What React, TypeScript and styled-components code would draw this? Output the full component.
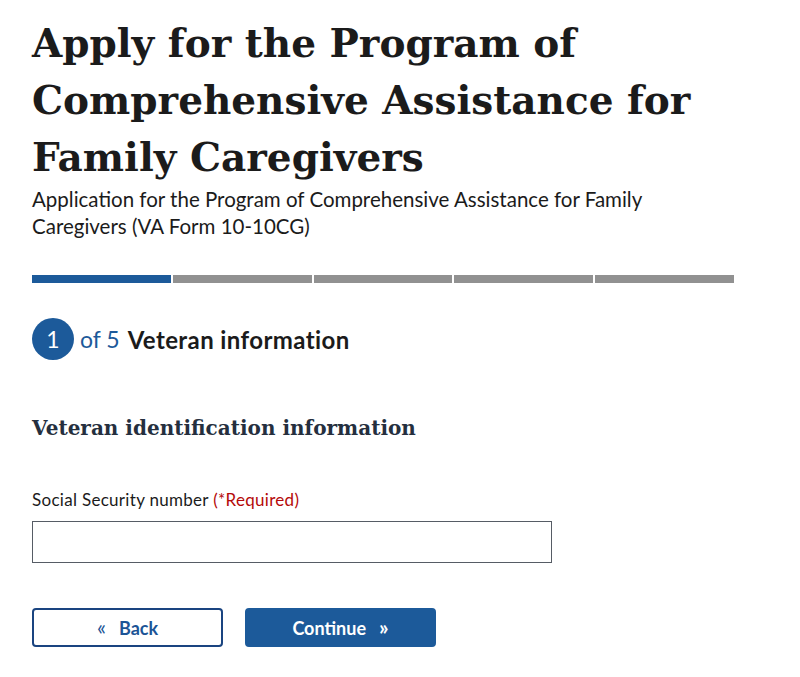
import React from "react";
import styled, { createGlobalStyle } from "styled-components";

const Global = createGlobalStyle`
  html, body { margin: 0; padding: 0; background: #ffffff; }
  body { font-family: "Lato", "Noto Sans", sans-serif; color: #1b1b1b; }
  * { box-sizing: border-box; }
`;

const Page = styled.main`
  width: 800px;
  padding: 0 66px 0 32px;
  display: flex;
  flex-direction: column;
`;

const Title = styled.h1`
  margin: 15px 0 0;
  font-family: "DejaVu Serif", serif;
  font-weight: 700;
  font-size: 39px;
  line-height: 57px;
  color: #1b1b1b;
`;

const Subtitle = styled.p`
  margin: 0;
  font-size: 20.5px;
  line-height: 27px;
  color: #1b1b1b;
`;

const Progress = styled.div`
  margin-top: 35px;
  display: grid;
  grid-template-columns: repeat(5, 1fr);
  gap: 2px;
`;

const Segment = styled.div<{ $active?: boolean }>`
  height: 8px;
  background: ${(p) => (p.$active ? "#1c5a9a" : "#919191")};
`;

const StepRow = styled.div`
  margin-top: 35px;
  display: flex;
  align-items: center;
  gap: 6px;
`;

const StepCircle = styled.span`
  width: 42px;
  height: 42px;
  border-radius: 50%;
  background: #1c5a9a;
  color: #ffffff;
  display: flex;
  align-items: center;
  justify-content: center;
  font-size: 23px;
`;

const StepOf = styled.span`
  color: #1c5a9a;
  font-size: 23px;
`;

const StepName = styled.span`
  font-weight: 700;
  font-size: 24px;
  letter-spacing: 0.4px;
  color: #1b1b1b;
  margin-left: 2px;
`;

const Section = styled.h3`
  margin: 54px 0 0;
  font-family: "DejaVu Serif", serif;
  font-weight: 700;
  font-size: 20px;
  line-height: 28px;
  color: #252f3e;
`;

const Label = styled.label`
  margin-top: 47px;
  font-size: 17px;
  letter-spacing: 0.3px;
  line-height: 22px;
  color: #1b1b1b;
`;

const Req = styled.span`
  color: #b50909;
`;

const Input = styled.input`
  margin-top: 10px;
  width: 520px;
  height: 42px;
  border: 1px solid #565c65;
  border-radius: 0;
  font-size: 16px;
  padding: 0 8px;
`;

const Buttons = styled.div`
  margin-top: 45px;
  display: flex;
  gap: 22px;
`;

const Button = styled.button<{ $primary?: boolean }>`
  width: 191px;
  height: 39px;
  border-radius: 4px;
  font-family: "Lato", sans-serif;
  font-weight: 700;
  font-size: 18px;
  display: flex;
  align-items: center;
  justify-content: center;
  gap: 13px;
  cursor: pointer;
  border: 2px solid ${(p) => (p.$primary ? "#1c5a9a" : "#1a4480")};
  background: ${(p) => (p.$primary ? "#1c5a9a" : "#ffffff")};
  color: ${(p) => (p.$primary ? "#ffffff" : "#1c5496")};
`;

const Chev = styled.span<{ $bold?: boolean }>`
  font-weight: ${(p) => (p.$bold ? 700 : 400)};
  font-size: 21px;
  line-height: 1;
  margin-top: -2px;
`;

export default function App() {
  return (
    <>
      <Global />
      <Page>
        <Title>Apply for the Program of Comprehensive Assistance for Family Caregivers</Title>
        <Subtitle>
          Application for the Program of Comprehensive Assistance for Family Caregivers (VA Form 10-10CG)
        </Subtitle>
        <Progress>
          <Segment $active />
          <Segment />
          <Segment />
          <Segment />
          <Segment />
        </Progress>
        <StepRow>
          <StepCircle>1</StepCircle>
          <StepOf>of 5</StepOf>
          <StepName>Veteran information</StepName>
        </StepRow>
        <Section>Veteran identification information</Section>
        <Label htmlFor="ssn">
          Social Security number <Req>(*Required)</Req>
        </Label>
        <Input id="ssn" type="text" />
        <Buttons>
          <Button>
            <Chev>«</Chev>
            Back
          </Button>
          <Button $primary>
            Continue
            <Chev $bold>»</Chev>
          </Button>
        </Buttons>
      </Page>
    </>
  );
}
